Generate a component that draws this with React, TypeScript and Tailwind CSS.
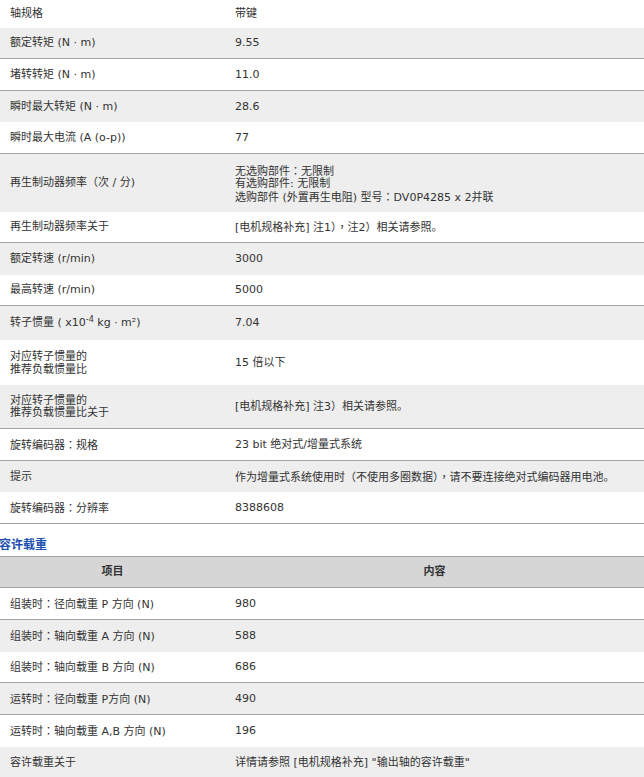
import type { ReactNode } from "react";

type Row = {
  label: ReactNode;
  value: ReactNode;
  h: string;
  gray?: boolean;
  line?: boolean;
};

// 全角标点居中显示 (TC 字形)
const P = ({ c }: { c: string }) => <span className="font-['Noto_Sans_CJK_TC']">{c}</span>;

const specRows: Row[] = [
  { label: "轴规格", value: "带键", h: "h-[28px]" },
  { label: "额定转矩 (N · m)", value: "9.55", h: "h-[31px]", gray: true, line: true },
  { label: "堵转转矩 (N · m)", value: "11.0", h: "h-[32px]", line: true },
  { label: "瞬时最大转矩 (N · m)", value: "28.6", h: "h-[31px]", gray: true },
  { label: "瞬时最大电流 (A (o-p))", value: "77", h: "h-[32px]", line: true },
  {
    label: "再生制动器频率（次 / 分)",
    value: (
      <div className="leading-[12px]">
        <div>
          无选购部件<P c="：" />无限制
        </div>
        <div>有选购部件: 无限制</div>
        <div>
          选购部件 (外置再生电阻) 型号<P c="：" />DV0P4285 x 2并联
        </div>
      </div>
    ),
    h: "h-[58px]",
    gray: true,
  },
  {
    label: "再生制动器频率关于",
    value: (
      <span>
        [电机规格补充] 注1）<P c="，" />注2）相关请参照。
      </span>
    ),
    h: "h-[31px]",
    line: true,
  },
  { label: "额定转速 (r/min)", value: "3000", h: "h-[32px]", gray: true },
  { label: "最高转速 (r/min)", value: "5000", h: "h-[31px]", line: true },
  {
    label: (
      <span>
        转子惯量 ( x10<sup className="text-[8px]">-4</sup> kg · m²)
      </span>
    ),
    value: "7.04",
    h: "h-[34px]",
    gray: true,
  },
  {
    label: (
      <div className="leading-[13px]">
        <div>对应转子惯量的</div>
        <div>推荐负载惯量比</div>
      </div>
    ),
    value: "15 倍以下",
    h: "h-[45px]",
  },
  {
    label: (
      <div className="leading-[12px]">
        <div>对应转子惯量的</div>
        <div>推荐负载惯量比关于</div>
      </div>
    ),
    value: "[电机规格补充] 注3）相关请参照。",
    h: "h-[44px]",
    gray: true,
    line: true,
  },
  {
    label: (
      <span>
        旋转编码器<P c="：" />规格
      </span>
    ),
    value: "23 bit 绝对式/增量式系统",
    h: "h-[32px]",
    line: true,
  },
  {
    label: "提示",
    value: (
      <span>
        作为增量式系统使用时（不使用多圈数据）<P c="，" />请不要连接绝对式编码器用电池。
      </span>
    ),
    h: "h-[31px]",
    gray: true,
  },
  {
    label: (
      <span>
        旋转编码器<P c="：" />分辨率
      </span>
    ),
    value: "8388608",
    h: "h-[32px]",
    line: true,
  },
];

const load = (when: string, rest: string) => (
  <span>
    {when}
    <P c="：" />
    {rest}
  </span>
);

const loadRows: Row[] = [
  { label: load("组装时", "径向载重 P 方向 (N)"), value: "980", h: "h-[32px]", line: true },
  { label: load("组装时", "轴向载重 A 方向 (N)"), value: "588", h: "h-[32px]", gray: true },
  { label: load("组装时", "轴向载重 B 方向 (N)"), value: "686", h: "h-[31px]", line: true },
  { label: load("运转时", "径向载重 P方向 (N)"), value: "490", h: "h-[32px]", gray: true, line: true },
  { label: load("运转时", "轴向载重 A,B 方向 (N)"), value: "196", h: "h-[32px]" },
  { label: "容许载重关于", value: "详情请参照 [电机规格补充] \"输出轴的容许载重\"", h: "h-[32px]", gray: true },
];

function SpecRow({ row }: { row: Row }) {
  return (
    <div
      className={`flex items-center pt-px ${row.h} ${row.gray ? "bg-[#eeeeee]" : "bg-white"} ${
        row.line ? "border-b border-[#a3a3a3]" : ""
      }`}
    >
      <div className="w-[225px] shrink-0 pl-[10px]">{row.label}</div>
      <div className="flex-1 pl-[10px]">{row.value}</div>
    </div>
  );
}

export default function App() {
  return (
    <div
      className="w-[644px] h-[777px] overflow-hidden bg-white text-[11px] text-[#333333]"
      style={{ fontFamily: '"DejaVu Sans", "Noto Sans CJK SC", sans-serif' }}
    >
      {/* 电机规格 */}
      <div>
        {specRows.map((r, i) => (
          <SpecRow key={i} row={r} />
        ))}
      </div>

      {/* 容许载重 */}
      <div className="h-[32px] pt-[14px]">
        <h3 className="-ml-[1px] text-[12px] leading-[14px] font-bold text-[#1c4fae]">容许载重</h3>
      </div>
      <div className="flex h-[32px] items-center border-y border-[#a3a3a3] bg-[#d6d6d6] font-bold">
        <div className="w-[225px] shrink-0 text-center">项目</div>
        <div className="flex-1 text-center">内容</div>
      </div>
      <div>
        {loadRows.map((r, i) => (
          <SpecRow key={i} row={r} />
        ))}
      </div>
    </div>
  );
}
